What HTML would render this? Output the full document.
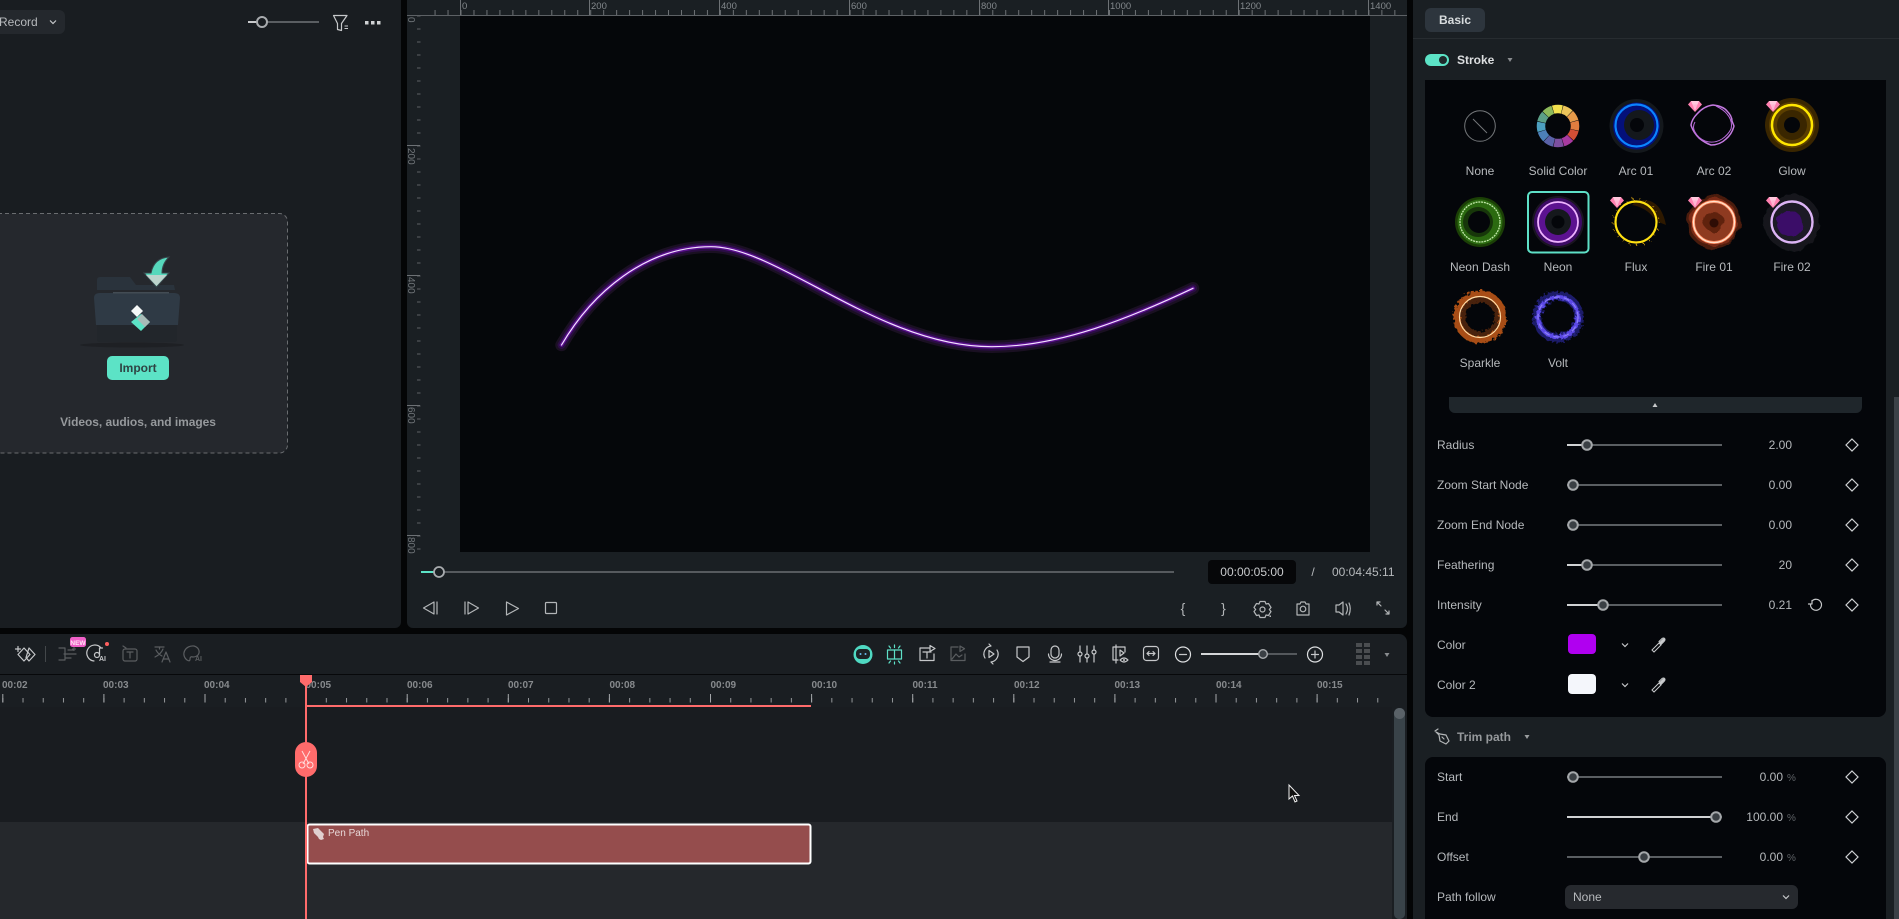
<!DOCTYPE html>
<html><head><meta charset="utf-8"><title>Editor</title>
<style>
html,body{margin:0;padding:0;background:#040506;width:1899px;height:919px;overflow:hidden}
svg{display:block;position:absolute;left:0;top:0}
text{font-family:"Liberation Sans",sans-serif}
.l{font-size:12px;fill:#b6b9bc}
.c{font-size:12px;fill:#b6b9bc;text-anchor:middle}
.v{font-size:12px;fill:#b6b9bc;text-anchor:end}
.p{font-size:10px;fill:#6f7478}
.r{font-size:9.5px;fill:#83888c}
.t{font-size:10px;font-weight:bold;fill:#878a8d}
.i{fill:none;stroke:#c6c8ca;stroke-width:1.2;stroke-linecap:round;stroke-linejoin:round}
.g{fill:none;stroke:#5a5d60;stroke-width:1.2;stroke-linecap:round;stroke-linejoin:round}
.a{fill:none;stroke:#b3b6b8;stroke-width:1.2;stroke-linecap:round;stroke-linejoin:round}
</style></head><body>
<svg width="1899" height="919" viewBox="0 0 1899 919" xmlns="http://www.w3.org/2000/svg">
<defs>
<pattern id="hr" patternUnits="userSpaceOnUse" x="460.5" y="0" width="12.97" height="20"><rect width="1" height="20" fill="#6d7175"/></pattern>
<pattern id="vr" patternUnits="userSpaceOnUse" x="0" y="15.5" width="20" height="13"><rect width="20" height="1" fill="#5d6165"/></pattern>
<pattern id="tm" patternUnits="userSpaceOnUse" x="2.3" y="0" width="20.22" height="20"><rect width="1" height="20" fill="#94979a"/></pattern>
<pattern id="tM" patternUnits="userSpaceOnUse" x="2.3" y="0" width="101.1" height="20"><rect width="1" height="20" fill="#a4a7aa"/></pattern>
<filter id="b1" x="-30%" y="-30%" width="160%" height="160%"><feGaussianBlur stdDeviation="1"/></filter>
<filter id="b2" x="-30%" y="-30%" width="160%" height="160%"><feGaussianBlur stdDeviation="2"/></filter>
<filter id="nz" x="-30%" y="-30%" width="160%" height="160%"><feTurbulence type="fractalNoise" baseFrequency="0.35" numOctaves="2" seed="4"/><feDisplacementMap in="SourceGraphic" scale="6"/></filter>
<filter id="nz2" x="-30%" y="-30%" width="160%" height="160%"><feTurbulence type="fractalNoise" baseFrequency="0.09" numOctaves="2" seed="7"/><feDisplacementMap in="SourceGraphic" scale="7"/></filter>
<g id="gem"><polygon points="-4,-5 4,-5 7,-1.5 0,6 -7,-1.5" fill="#ff80b0"/><polygon points="-2.5,-1.5 2.5,-1.5 0,5" fill="#ffb5d2"/><polygon points="-4,-5 4,-5 2.5,-1.5 -2.5,-1.5" fill="#ffc8dd"/></g>
<g id="dia"><polygon points="0,-6 6,0 0,6 -6,0" fill="none" stroke="#cfd1d3" stroke-width="1.2"/></g>
<g id="chev"><path d="M-3,-1.5 L0,1.5 L3,-1.5" fill="none" stroke="#c6c8ca" stroke-width="1.2"/></g>
<g id="drop"><path d="M-5,6 L-6,5 L1,-2 L3,0 L-4,7Z M1,-3.5 L4,-6.5 Q6,-7.5 6.8,-6.3 Q7.5,-5 6,-3.5 L3.5,-1Z" fill="none" stroke="#c9cbcd" stroke-width="1"/><path d="M1.5,-3 L4.5,-6 Q6,-7 6.5,-6 Q7,-5 6,-4 L3,-1Z" fill="#c9cbcd"/></g>
</defs>

<!-- panels -->
<rect width="1899" height="919" fill="#040506"/>
<path d="M0 0H401V622a6 6 0 0 1-6 6H0Z" fill="#191d21"/>
<path d="M407 0H1407V622a6 6 0 0 1-6 6H413a6 6 0 0 1-6-6Z" fill="#1a1f23"/>
<rect x="460" y="16" width="910" height="536" fill="#05070a"/>
<path d="M0 634H1399a8 8 0 0 1 8 8V919H0Z" fill="#1a1e22"/>
<rect x="0" y="674" width="1407" height="1" fill="#07080a"/>
<rect x="0" y="707" width="1392" height="115" fill="#191c20"/>
<rect x="0" y="822" width="1392" height="97" fill="#25282c"/>
<rect x="1413" y="0" width="486" height="919" fill="#1a1f23"/>
<rect x="1413" y="38" width="486" height="1" fill="#272c30"/>

<!-- left panel top -->
<path d="M0 10H59a6 6 0 0 1 6 6V28a6 6 0 0 1-6 6H0Z" fill="#24282d"/>
<text x="-1" y="26" class="l">Record</text>
<use href="#chev" x="53" y="22"/>
<path d="M248 22H262" stroke="#c8cacc" stroke-width="2"/><path d="M262 22H319" stroke="#5a5e62" stroke-width="2"/>
<circle cx="262" cy="22" r="5" fill="#191d21" stroke="#a8abae" stroke-width="2"/>
<path d="M333.5 15.5H347L341.5 23.5V30.5L337.5 29.5V23.5Z" class="i"/><path d="M344.5 26H348M344.5 28.5H348" stroke="#c6c8ca" stroke-width="1"/>
<rect x="365" y="21" width="3.5" height="3.5" fill="#d0d2d4"/><rect x="371" y="21" width="3.5" height="3.5" fill="#d0d2d4"/><rect x="377" y="21" width="3.5" height="3.5" fill="#d0d2d4"/>

<!-- import box -->
<rect x="-10" y="213.5" width="297.5" height="239.5" rx="8" fill="#25282d" stroke="#6a6d70" stroke-width="1" stroke-dasharray="4 3"/>
<ellipse cx="132" cy="345" rx="52" ry="2.5" fill="#1e2024"/>
<path d="M97 280q0-3 3-3h30l6 8h38l1 5H97Z" fill="#2a333c"/>
<path d="M94 298q0-5 6-5h74q6 0 6 5l-2 27H96Z" fill="#2f3a45"/>
<path d="M97 325H177V339q0 3-3 3H100q-3 0-3-3Z" fill="#22262b"/>
<rect x="113" y="292" width="56" height="1.5" fill="#434c54"/>
<polygon points="137,305 143,311 137,317 131,311" fill="#f5f8f8"/>
<polygon points="141,314 150,322 141,331 131,322" fill="#5ce3c6"/>
<polygon points="142,314 150,322 145,327 137,319" fill="#a8bcb8"/>
<path d="M169 257q-15 1-18 16h-7l12.500 14 12.500-14h-7q0-9 7-16Z" fill="#56d8bc" stroke="#38464c" stroke-width="1"/>
<polygon points="146,275 167,275 156.500,286" fill="#bcd4cd"/>
<rect x="107" y="356" width="62" height="24" rx="5" fill="#5ce3c6"/>
<text x="138" y="372" font-size="12" font-weight="bold" fill="#2e4444" text-anchor="middle">Import</text>
<text x="138" y="426" font-size="12" font-weight="bold" fill="#96999c" text-anchor="middle" letter-spacing="-.05">Videos, audios, and images</text>

<!-- preview rulers -->
<rect x="407" y="15" width="1000" height="1" fill="#5d6165"/>
<rect x="434" y="10" width="973" height="5" fill="url(#hr)"/>
<rect x="417" y="16" width="3.5" height="536" fill="url(#vr)"/>
<g fill="#6d7175">
<rect x="460" y="0" width="1" height="15"/><rect x="589" y="0" width="1" height="15"/><rect x="719" y="0" width="1" height="15"/><rect x="849" y="0" width="1" height="15"/><rect x="979" y="0" width="1" height="15"/><rect x="1108" y="0" width="1" height="15"/><rect x="1238" y="0" width="1" height="15"/><rect x="1368" y="0" width="1" height="15"/>
<rect x="407" y="145" width="13" height="1"/><rect x="407" y="275" width="13" height="1"/><rect x="407" y="405" width="13" height="1"/><rect x="407" y="535" width="13" height="1"/>
</g>
<text x="462" y="9" class="r">0</text><text x="591" y="9" class="r">200</text><text x="721" y="9" class="r">400</text><text x="851" y="9" class="r">600</text><text x="981" y="9" class="r">800</text><text x="1110" y="9" class="r">1000</text><text x="1240" y="9" class="r">1200</text><text x="1370" y="9" class="r">1400</text>
<text transform="translate(408,17) rotate(90)" class="p">0</text>
<text transform="translate(408,148) rotate(90)" class="p">200</text>
<text transform="translate(408,277) rotate(90)" class="p">400</text>
<text transform="translate(408,407) rotate(90)" class="p">600</text>
<text transform="translate(408,537) rotate(90)" class="p">800</text>

<!-- curve -->
<g fill="none" stroke-linecap="round">
<path d="M561.5 345C592 293 645 246.700 711 246.700C778 246.700 880 347 992 346.700C1060 346.700 1130 318 1193 288.300" stroke="#1a1022" stroke-width="12.500"/>
<path d="M561.5 345C592 293 645 246.700 711 246.700C778 246.700 880 347 992 346.700C1060 346.700 1130 318 1193 288.300" stroke="#2b0d45" stroke-width="8"/>
<path d="M561.5 345C592 293 645 246.700 711 246.700C778 246.700 880 347 992 346.700C1060 346.700 1130 318 1193 288.300" stroke="#5c1090" stroke-width="3.800"/>
<path d="M561.5 345C592 293 645 246.700 711 246.700C778 246.700 880 347 992 346.700C1060 346.700 1130 318 1193 288.300" stroke="#f2e2ff" stroke-width="1.200"/>
</g>

<!-- playback -->
<path d="M421 572H1174" stroke="#565a5e" stroke-width="2"/><path d="M421 572H435" stroke="#5ce3c6" stroke-width="2"/>
<circle cx="439" cy="572" r="5" fill="#1a1f23" stroke="#a8abae" stroke-width="1.8"/>
<rect x="1208" y="560" width="88" height="24" rx="4" fill="#060709"/>
<text x="1252" y="576" class="c" style="fill:#c8cacc">00:00:05:00</text>
<text x="1313" y="576" class="c">/</text>
<text x="1332" y="576" class="l">00:04:45:11</text>
<path d="M434 602L423.500 608L434 614ZM437 602V614" class="a"/>
<path d="M468 602L478.500 608L468 614ZM465 602V614" class="a"/>
<path d="M506.500 602L518.500 608.500L506.500 615Z" class="a"/>
<rect x="545.500" y="602.500" width="11" height="11" rx="1" class="a" stroke-width="1.4"/>
<text x="1183" y="613" font-size="14" fill="#b3b6b8" text-anchor="middle">{</text>
<text x="1223.500" y="613" font-size="14" fill="#b3b6b8" text-anchor="middle">}</text>
<path d="M1260 601.500h5l1 2.500 2.500-.5 2.500 4-1.700 2 1.700 2-2.500 4-2.500-.5-1 2.500h-5l-1-2.500-2.500.5-2.500-4 1.700-2-1.700-2 2.500-4 2.500.5Z" class="a"/><circle cx="1262.500" cy="609.500" r="2.500" class="a"/><rect x="1269.500" y="615.500" width="1.500" height="1.500" fill="#b3b6b8"/>
<path d="M1297 604h3l1-2h4l1 2h3v11h-12Z" class="a"/><circle cx="1303" cy="609" r="2.800" class="a"/>
<path d="M1336 605h3l4-3v13l-4-3h-3Z" class="a"/><path d="M1346 604q3 4.500 0 10M1349 603q2.500 5.500 0 12" class="a"/>
<path d="M1377 602l4 4M1377 602v3M1377 602h3M1389 614l-4-4M1389 614v-3M1389 614h-3" class="a" stroke-width="1"/>

<!-- timeline toolbar left -->
<path d="M18 646.500v5M15.500 649h5" class="i"/>
<polygon points="24,648 30,654.500 24,661 18,654.500" class="i"/><polygon points="29,648 35,654.500 29,661 26,657.500" class="i"/>
<rect x="45" y="646" width="1" height="16" fill="#43474a"/>
<path d="M59 648h6v12h-6M64 654h12M68 650l6 0M71 658h-6" class="g"/><path d="M74 647v4M72 649h4" stroke="#5a5d60"/>
<rect x="70" y="637" width="16" height="10" rx="2.500" fill="#f060c8"/><text x="78" y="645" font-size="6.500" font-weight="bold" fill="#ffe6f5" text-anchor="middle">NEW</text>
<path d="M101 648a8 8 0 1 0-7 13" class="i"/><circle cx="97" cy="655" r="2.500" class="i"/><path d="M99.500 655v-7h3" class="i"/>
<text x="99" y="661" font-size="7" font-weight="bold" fill="#c6c8ca">AI</text>
<circle cx="107" cy="644" r="2" fill="#ff5f5f"/>
<rect x="123" y="649" width="14" height="12" rx="2" class="g"/><path d="M127 652h6M130 652v6M123 646l3 2" class="g"/>
<path d="M155 647h9M159.500 647v2M163 649q-2 5-8 8M156 650q2 4 6 6M162 662l4-10 4 10M163.500 659h5" class="g"/>
<path d="M194 646a9 8 0 0 0-7 14q3 2 3-1t3-2q3 0 5-2a7 6 0 0 0-4-9Z" class="g"/><text x="195" y="661" font-size="7" font-weight="bold" fill="#5a5d60">AI</text>

<!-- timeline toolbar right -->
<circle cx="863" cy="654.500" r="9.500" fill="#4fd9c2"/><rect x="856" y="649" width="14" height="10" rx="4" fill="#1c2226"/><circle cx="860.500" cy="654" r="1" fill="#6be"/><circle cx="865.500" cy="654" r="1" fill="#6be"/>
<g class="i" style="stroke:#5ee0c7"><rect x="887.500" y="650" width="14" height="9"/><path d="M894.500 650v9M894.500 645v2.500M894.500 662v2M889 646l1.500 2M900 646l-1.500 2M889 663l1.500-2M900 663l-1.500-2"/></g>
<path d="M929 648h-9v12.500h14V654M923 652h8M927 652v6M930 645.500v6l5-3Z" class="i"/>
<path d="M958 647h-7v13.500h14V654M952 659l4-5 3 3 3-2M960 646v5.500l4.500-2.800Z" class="g"/>
<path d="M985 658a8 8 0 0 1 6-12M997 650a8 8 0 0 1-6 12M991 646l-2-2M991 662l2 2M989 650.500v7l5-3.500Z" class="i"/>
<path d="M1017 647h12v10l-6 4.500-6-4.500Z" class="i"/>
<rect x="1051" y="646" width="8" height="12" rx="4" class="i"/><path d="M1048.500 654a6.500 6.500 0 0 0 13 0M1050 662h10" class="i"/>
<path d="M1080 646v16M1087 646v16M1094 646v16" class="i"/><circle cx="1080" cy="654" r="2" class="i" style="fill:#1a1e22"/><circle cx="1087" cy="656" r="2" class="i" style="fill:#1a1e22"/><circle cx="1094" cy="652" r="2" class="i" style="fill:#1a1e22"/>
<path d="M1122 647h-9v13h5M1116 645v18M1120 650v6l4-3ZM1122 647h3v5" class="i"/><path d="M1120 660q4-4 8 0q-4 4-8 0Z" class="i"/><circle cx="1124" cy="660" r="1" fill="#c6c8ca"/>
<rect x="1143.500" y="646.500" width="15" height="14" rx="3" class="i"/><path d="M1147 653.500h8M1147 653.500l2-2M1147 653.500l2 2M1155 653.500l-2-2M1155 653.500l-2 2" class="i"/>
<circle cx="1183" cy="654.500" r="7.500" class="i" style="stroke:#dcdee0"/><path d="M1179.500 654.500h7" class="i"/>
<path d="M1201 654H1263" stroke="#d4d6d8" stroke-width="2"/><path d="M1263 654H1297" stroke="#54585c" stroke-width="2"/><circle cx="1263" cy="654" r="4.300" fill="#3a3f44" stroke="#a8abae" stroke-width="1.400"/>
<circle cx="1315" cy="654.500" r="7.500" class="i" style="stroke:#dcdee0"/><path d="M1311.500 654.500h7M1315 651v7" class="i"/>
<g fill="#4a4d50"><rect x="1356" y="643" width="6" height="4"/><rect x="1364" y="643" width="6" height="4"/><rect x="1356" y="649" width="6" height="4"/><rect x="1364" y="649" width="6" height="4"/><rect x="1356" y="655" width="6" height="4"/><rect x="1364" y="655" width="6" height="4"/><rect x="1356" y="661" width="6" height="4"/><rect x="1364" y="661" width="6" height="4"/></g>
<polygon points="1384.500,653 1389.500,653 1387,657" fill="#8a8d90"/>

<!-- timeline ruler -->
<rect x="0" y="698" width="1380" height="4.500" fill="url(#tm)"/>
<rect x="0" y="694" width="1380" height="8.500" fill="url(#tM)"/>
<text x="2" y="688" class="t">00:02</text><text x="103" y="688" class="t">00:03</text><text x="204" y="688" class="t">00:04</text><text x="305.500" y="688" class="t">00:05</text><text x="407" y="688" class="t">00:06</text><text x="508" y="688" class="t">00:07</text><text x="609.500" y="688" class="t">00:08</text><text x="710.500" y="688" class="t">00:09</text><text x="811.500" y="688" class="t">00:10</text><text x="912.500" y="688" class="t">00:11</text><text x="1014" y="688" class="t">00:12</text><text x="1114.500" y="688" class="t">00:13</text><text x="1216" y="688" class="t">00:14</text><text x="1317" y="688" class="t">00:15</text>

<!-- scrollbar -->
<rect x="1394" y="708" width="11" height="211" rx="5" fill="#394349"/>
<rect x="1394" y="708" width="11" height="11" rx="5.500" fill="#5a6268"/>

<!-- clip -->
<rect x="307.500" y="824.500" width="503" height="39" rx="2" fill="#954d4d" stroke="#fff" stroke-width="2"/>
<path d="M313 829l5-1 6 6-1 3 1 2-3 1-2-1-1-2-4-4Z" fill="#e0d0d0"/>
<text x="328" y="836" font-size="10" fill="#e8d8d8">Pen Path</text>

<!-- playhead -->
<rect x="305" y="680" width="2" height="239" fill="#ff6b6b"/>
<path d="M300 675h12v7l-6 5-6-5Z" fill="#ff6b6b"/>
<rect x="306" y="705" width="505" height="2" fill="#ff6b6b"/>
<rect x="295" y="742" width="22" height="35" rx="11" fill="#ff6b6b"/>
<path d="M302 751l7 13M310 751l-7 13" stroke="#ffdcdc" fill="none" stroke-width="1"/><circle cx="302" cy="765" r="3" fill="none" stroke="#ffdcdc"/><circle cx="310" cy="765" r="3" fill="none" stroke="#ffdcdc"/>

<!-- cursor -->
<path d="M1289 785V799L1292.500 796L1295 802L1297 801L1294.500 795.500H1299Z" fill="#111" stroke="#eee" stroke-width="1"/>

<!-- right panel head -->
<rect x="1425" y="8" width="60" height="24" rx="6" fill="#2d353d"/>
<text x="1439" y="24" font-size="12" font-weight="bold" fill="#d8dcde">Basic</text>
<rect x="1425" y="54" width="24" height="12" rx="6" fill="#5ce3c6"/><circle cx="1443" cy="60" r="4" fill="#1f2a2c"/>
<text x="1457" y="64" font-size="12" font-weight="bold" fill="#dcdee0">Stroke</text>
<polygon points="1507.500,58 1512.500,58 1510,62" fill="#8a8d90"/>

<!-- property blocks -->
<path d="M1425 80H1886V709a8 8 0 0 1-8 8H1433a8 8 0 0 1-8-8Z" fill="#04060a"/>
<path d="M1425 765a8 8 0 0 1 8-8H1878a8 8 0 0 1 8 8V919H1425Z" fill="#04060a"/>
<rect x="1894" y="397" width="5" height="522" fill="#3b4147"/>

<!-- rings -->
<circle cx="1480" cy="126" r="15.300" fill="none" stroke="#74777a" stroke-width="1"/><path d="M1473 119L1487 133" stroke="#74777a" stroke-width="1"/>
<g fill="none" stroke-width="8.500" transform="translate(1558 126) rotate(-105)">
<circle r="17" pathLength="12" stroke="#f2e04e" stroke-dasharray=".95 11.050"/>
<circle r="17" pathLength="12" stroke="#ecc45a" stroke-dasharray=".95 11.050" stroke-dashoffset="-1"/>
<circle r="17" pathLength="12" stroke="#e69a4a" stroke-dasharray=".95 11.050" stroke-dashoffset="-2"/>
<circle r="17" pathLength="12" stroke="#e07d3f" stroke-dasharray=".95 11.050" stroke-dashoffset="-3"/>
<circle r="17" pathLength="12" stroke="#d34f35" stroke-dasharray=".95 11.050" stroke-dashoffset="-4"/>
<circle r="17" pathLength="12" stroke="#a83aa0" stroke-dasharray=".95 11.050" stroke-dashoffset="-5"/>
<circle r="17" pathLength="12" stroke="#7d4fa0" stroke-dasharray=".95 11.050" stroke-dashoffset="-6"/>
<circle r="17" pathLength="12" stroke="#5a62a8" stroke-dasharray=".95 11.050" stroke-dashoffset="-7"/>
<circle r="17" pathLength="12" stroke="#4c80b8" stroke-dasharray=".95 11.050" stroke-dashoffset="-8"/>
<circle r="17" pathLength="12" stroke="#4c9fc0" stroke-dasharray=".95 11.050" stroke-dashoffset="-9"/>
<circle r="17" pathLength="12" stroke="#5ca088" stroke-dasharray=".95 11.050" stroke-dashoffset="-10"/>
<circle r="17" pathLength="12" stroke="#8cb85a" stroke-dasharray=".95 11.050" stroke-dashoffset="-11"/>
</g>
<!-- arc 01 -->
<circle cx="1636.500" cy="126" r="27" fill="#14181c"/><circle cx="1636.500" cy="126" r="23.500" fill="#04107a"/><circle cx="1639" cy="125" r="15" fill="#14181c"/><circle cx="1637" cy="125" r="7" fill="#04060a"/>
<circle cx="1636.500" cy="125.500" r="21" fill="none" stroke="#0a84ff" stroke-width="2.200"/>
<!-- arc 02 -->
<path d="M1713 105q10 1 14 6q5 5 5 10l2 5q-2 8-8 13q-6 6-15 6q-6-2-12-7q-6-6-8-13q1-6 6-11q7-8 16-9Z" fill="none" stroke="#c47ae0" stroke-width="1.500"/>
<path d="M1716 106q8 4 11 8q6 7 4 15q-3 6-9 10q-8 5-17 2q-7-3-10-9q-3-5 0-10" fill="none" stroke="#b668d8" stroke-width="1"/>
<!-- glow -->
<circle cx="1792" cy="125" r="27" fill="#3a2600"/><circle cx="1792" cy="125" r="23" fill="#5a3e00"/><circle cx="1792" cy="125" r="15" fill="#3a2600"/><circle cx="1792" cy="125" r="8" fill="#04060a"/>
<circle cx="1792" cy="125" r="20" fill="none" stroke="#ffe600" stroke-width="2.500"/>
<!-- neon dash -->
<circle cx="1480" cy="222" r="25" fill="#1b3f06"/><circle cx="1480" cy="222" r="22.500" fill="#2b6a10"/><circle cx="1478" cy="222" r="15" fill="#17370a"/><circle cx="1479" cy="222" r="11" fill="#04060a"/>
<circle cx="1480" cy="222" r="20" fill="none" stroke="#c0e8a8" stroke-width="1.300" stroke-dasharray="2 .8"/>
<!-- neon -->
<rect x="1528" y="192" width="60.500" height="60.500" rx="4" fill="#04060a" stroke="#5ee0c7" stroke-width="2"/>
<circle cx="1558" cy="222" r="26" fill="#1a1520"/><circle cx="1558" cy="222" r="24" fill="#3e0b66"/><circle cx="1558" cy="222" r="19.500" fill="#5c1290"/><circle cx="1558" cy="222" r="13" fill="#15181c"/><circle cx="1558" cy="222" r="6.500" fill="#04060a"/>
<circle cx="1558" cy="222" r="20" fill="none" stroke="#eeb2ff" stroke-width="1.800"/>
<!-- flux -->
<path d="M1636 201Q1660 195 1666 225L1656 221Q1648 208 1632 205Z" fill="#2e1900"/>
<circle cx="1636" cy="222" r="20.500" fill="none" stroke="#ffe012" stroke-width="2.200"/>
<circle cx="1636" cy="222" r="23" fill="none" stroke="#e0a810" stroke-width="1.500" stroke-dasharray="1 6" filter="url(#nz)"/>
<!-- fire 01 -->
<circle cx="1714" cy="222" r="27" fill="#4a1a0c" filter="url(#nz2)"/><circle cx="1714" cy="222" r="24" fill="#7a2a15" filter="url(#nz2)"/><circle cx="1714" cy="222" r="19" fill="#8e3a20"/><circle cx="1714" cy="222" r="10" fill="#5f2110" filter="url(#nz2)"/><circle cx="1714" cy="223" r="4.500" fill="#2e0d05"/>
<circle cx="1714" cy="222" r="20.500" fill="none" stroke="#ff8a5e" stroke-width="3"/><circle cx="1714" cy="222" r="20.500" fill="none" stroke="#ffe2cc" stroke-width="1.300"/>
<!-- fire 02 -->
<circle cx="1792" cy="222" r="28" fill="#14181c" filter="url(#nz2)"/><circle cx="1792" cy="222" r="19" fill="#1c1a26"/><circle cx="1790" cy="224" r="13" fill="#3a0a68" filter="url(#nz2)"/>
<circle cx="1792" cy="222" r="20.500" fill="none" stroke="#dcb4f5" stroke-width="2.400"/>
<!-- sparkle -->
<circle cx="1480" cy="317" r="23" fill="none" stroke="#a84e12" stroke-width="7" filter="url(#nz)"/>
<circle cx="1480" cy="317" r="17" fill="none" stroke="#4a2308" stroke-width="5" filter="url(#nz)"/>
<circle cx="1480" cy="317" r="20.500" fill="none" stroke="#ffdca8" stroke-width="1.200"/>
<!-- volt -->
<circle cx="1558" cy="317" r="21" fill="none" stroke="#1e1a6a" stroke-width="9" filter="url(#nz)"/>
<circle cx="1558" cy="317" r="20" fill="none" stroke="#5b49e6" stroke-width="4" filter="url(#nz)"/>
<circle cx="1558" cy="317" r="20" fill="none" stroke="#8d80f5" stroke-width="1.200" stroke-dasharray="6 4"/>
<use href="#gem" x="1695" y="106"/><use href="#gem" x="1773" y="106"/><use href="#gem" x="1617" y="202"/><use href="#gem" x="1695" y="202"/><use href="#gem" x="1773" y="202"/>

<text x="1480" y="175" class="c">None</text><text x="1558" y="175" class="c">Solid Color</text><text x="1636" y="175" class="c">Arc 01</text><text x="1714" y="175" class="c">Arc 02</text><text x="1792" y="175" class="c">Glow</text>
<text x="1480" y="271" class="c">Neon Dash</text><text x="1558" y="271" class="c">Neon</text><text x="1636" y="271" class="c">Flux</text><text x="1714" y="271" class="c">Fire 01</text><text x="1792" y="271" class="c">Fire 02</text>
<text x="1480" y="367" class="c">Sparkle</text><text x="1558" y="367" class="c">Volt</text>

<path d="M1449 397H1862V407a6 6 0 0 1-6 6H1455a6 6 0 0 1-6-6Z" fill="#1f262b"/>
<polygon points="1652.500,407 1657.500,407 1655,403" fill="#c6c8ca"/>

<!-- stroke props -->
<g fill="none" stroke-width="2">
<path d="M1567 445H1722M1567 485H1722M1567 525H1722M1567 565H1722M1567 605H1722M1567 777H1722M1567 857H1722" stroke="#5a5e62"/>
<path d="M1567 445H1587M1567 565H1587M1567 605H1603M1567 817H1716" stroke="#d0d2d4"/>
<path d="M1716 817H1722" stroke="#5a5e62"/>
</g>
<g fill="#3a3f44" stroke="#a4a7aa" stroke-width="2">
<circle cx="1587" cy="445" r="4.800"/><circle cx="1573" cy="485" r="4.800"/><circle cx="1573" cy="525" r="4.800"/><circle cx="1587" cy="565" r="4.800"/><circle cx="1603" cy="605" r="4.800"/><circle cx="1573" cy="777" r="4.800"/><circle cx="1716" cy="817" r="4.800"/><circle cx="1644" cy="857" r="4.800"/>
</g>
<text x="1437" y="449" class="l">Radius</text><text x="1437" y="489" class="l">Zoom Start Node</text><text x="1437" y="529" class="l">Zoom End Node</text><text x="1437" y="569" class="l">Feathering</text><text x="1437" y="609" class="l">Intensity</text><text x="1437" y="649" class="l">Color</text><text x="1437" y="689" class="l">Color 2</text>
<text x="1792" y="449" class="v">2.00</text><text x="1792" y="489" class="v">0.00</text><text x="1792" y="529" class="v">0.00</text><text x="1792" y="569" class="v">20</text><text x="1792" y="609" class="v">0.21</text>
<use href="#dia" x="1852" y="445"/><use href="#dia" x="1852" y="485"/><use href="#dia" x="1852" y="525"/><use href="#dia" x="1852" y="565"/><use href="#dia" x="1852" y="605"/>
<path d="M1812 601a5.500 5.500 0 1 1-1.500 4M1812 600.500v3.500h-3.500" class="i"/>
<rect x="1568" y="634" width="28" height="20" rx="4" fill="#b000f0"/>
<rect x="1568" y="674" width="28" height="20" rx="4" fill="#f4f6fb"/>
<use href="#chev" x="1625" y="645"/><use href="#chev" x="1625" y="685"/>
<use href="#drop" x="1658" y="645"/><use href="#drop" x="1658" y="685"/>

<!-- trim -->
<path d="M1436 732l4 2 6 1 3 6-3 3-6-3-1-6Z" class="a"/><path d="M1435 731l3-2M1442 737l2 2" class="a"/>
<text x="1457" y="741" font-size="12" font-weight="bold" fill="#96999c">Trim path</text>
<polygon points="1524.500,735 1529.500,735 1527,739" fill="#9a9d9f"/>
<text x="1437" y="781" class="l">Start</text><text x="1437" y="821" class="l">End</text><text x="1437" y="861" class="l">Offset</text><text x="1437" y="901" class="l">Path follow</text>
<text x="1783" y="781" class="v">0.00</text><text x="1783" y="821" class="v">100.00</text><text x="1783" y="861" class="v">0.00</text>
<text x="1787" y="781" font-size="10" fill="#5e6266">%</text><text x="1787" y="821" font-size="10" fill="#5e6266">%</text><text x="1787" y="861" font-size="10" fill="#5e6266">%</text>
<use href="#dia" x="1852" y="777"/><use href="#dia" x="1852" y="817"/><use href="#dia" x="1852" y="857"/>
<rect x="1565" y="885" width="233" height="24" rx="6" fill="#26292e"/>
<text x="1573" y="901" class="l">None</text>
<use href="#chev" x="1786" y="897"/>
</svg>
</body></html>
